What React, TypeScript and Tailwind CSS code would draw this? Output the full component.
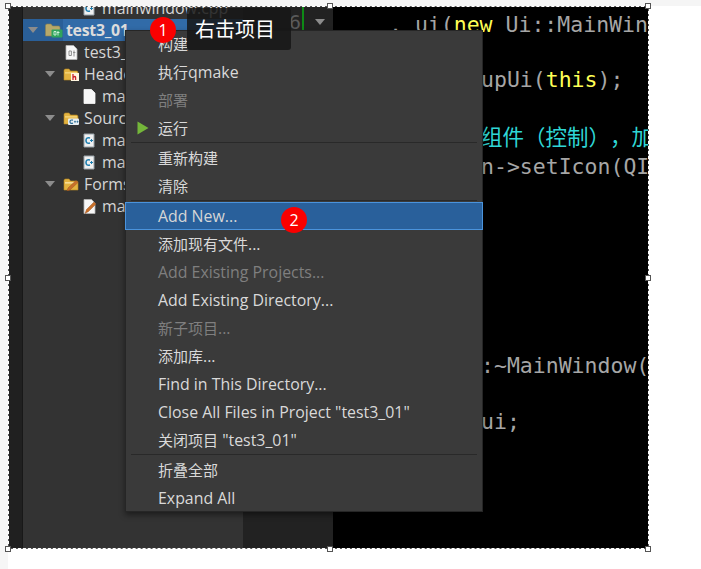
import React from "react";

const UI_FONT = "font-['Open_Sans','Noto_Sans_CJK_SC',sans-serif]";

function Arrow() {
  return (
    <svg width="10" height="6" viewBox="0 0 10 6" className="shrink-0">
      <path d="M0 0H10L5 6Z" fill="#8c8c8c" />
    </svg>
  );
}

function FolderBase({ open }: { open?: boolean }) {
  return (
    <>
      <path d="M1 3.5 Q1 2 2.5 2 H6 L7.5 4 H13.5 Q15 4 15 5.5 V13 H1 Z" fill="#e3b341" stroke="#b98a22" strokeWidth="0.6" />
      <path d="M2 5.2 H14 V6.5 H2 Z" fill={open ? "#fbe7a8" : "#f6d77e"} />
    </>
  );
}

function QtFolder() {
  return (
    <svg width="18" height="15" viewBox="0 0 18 15" className="shrink-0">
      <path d="M0.5 2.5 Q0.5 1 2 1 H6 L7.5 3 H13.5 Q15 3 15 4.5 V13 H0.5 Z" fill="#b7a86a" stroke="#8b8050" strokeWidth="0.6" />
      <rect x="6.5" y="6.5" width="11" height="8" rx="1" fill="#2fa45c" />
      <path d="M9 8.5h2v3.5H9zM13 8v4.5M12 9.5h2.5" stroke="#d6f5e0" strokeWidth="0.9" fill="none" />
    </svg>
  );
}

function TagFolder({ kind }: { kind: "h" | "c" | "f" }) {
  return (
    <svg width="16" height="14" viewBox="0 0 16 14" className="shrink-0">
      <FolderBase open={kind === "f"} />
      {kind === "h" && (
        <>
          <rect x="8" y="6" width="8" height="8" fill="#fff6e0" />
          <path d="M10 7v6M10 10.5q2.6-2 2.6 0V13" stroke="#c9242b" strokeWidth="1.3" fill="none" />
        </>
      )}
      {kind === "c" && (
        <>
          <rect x="5" y="7.5" width="11" height="6.5" rx="1" fill="#e8eef2" />
          <path d="M10 9.2 Q7 8.4 7 10.7 Q7 13 10 12.2" stroke="#2b6d96" strokeWidth="1.2" fill="none" />
          <path d="M11 10.7h2M12 9.7v2M13.5 10.7h2M14.5 9.7v2" stroke="#2b6d96" strokeWidth="0.8" />
        </>
      )}
      {kind === "f" && <path d="M4 14 L5 11 L13 3.5 L15 5.5 L7 13 Z" fill="#c8702a" stroke="#8d4a18" strokeWidth="0.4" />}
    </svg>
  );
}

function FileIcon({ kind }: { kind: "qt" | "blank" | "cpp" | "form" }) {
  const square = kind === "cpp";
  return (
    <svg width="13" height="15" viewBox="0 0 13 15" className="shrink-0">
      {square ? (
        <path d="M1 1H11V14H1Z" fill="#f0f0f0" stroke="#9aa4aa" strokeWidth="1" />
      ) : (
        <path d="M1 0.5H8.5L12 4V14.5H1Z" fill="#f7f7f7" stroke={kind === "blank" ? "#f7f7f7" : "#b5b5b5"} strokeWidth="0.8" />
      )}
      {kind === "qt" && <path d="M4 6h2.4v4.5H4zM9 5.5v6M8 7.5h2.4" stroke="#8d8d8d" strokeWidth="1" fill="none" />}
      {kind === "cpp" && (
        <>
          <path d="M7 5 Q3 4 3 7.5 Q3 11 7 10" stroke="#1f7fb0" strokeWidth="1.6" fill="none" />
          <path d="M7 7.5h3M8.5 6v3" stroke="#1f7fb0" strokeWidth="1" />
        </>
      )}
      {kind === "form" && <path d="M2 14.5 L3.5 10.5 L11 3 L13 5 L5.5 12.5 Z" fill="#c8702a" stroke="#8d4a18" strokeWidth="0.4" />}
    </svg>
  );
}

function Mixed({ text }: { text: string }) {
  const parts = text.split(/([\u4e00-\u9fff]+)/).filter(Boolean);
  return (
    <>
      {parts.map((p, i) =>
        /[\u4e00-\u9fff]/.test(p) ? (
          <span key={i} className="text-[15px]">
            {p}
          </span>
        ) : (
          <span key={i}>{p}</span>
        )
      )}
    </>
  );
}

function TreeRow({ indent, icon, label, arrow }: { indent: string; icon: React.ReactNode; label: string; arrow?: boolean }) {
  return (
    <div className={`flex h-[22px] shrink-0 items-center whitespace-nowrap text-[15.9px] text-[#d6d6d6] ${indent}`}>
      {arrow && <span className="mr-[8px] flex"><Arrow /></span>}
      {icon}
      <span className={arrow ? "ml-[5px] pt-[2px]" : "ml-[6px] pt-[2px]"}>{label}</span>
    </div>
  );
}

type MenuEntry = { label?: string; disabled?: boolean; run?: boolean; active?: boolean; sep?: boolean };

const MENU: MenuEntry[] = [
  { label: "构建" },
  { label: "执行qmake" },
  { label: "部署", disabled: true },
  { label: "运行", run: true },
  { sep: true },
  { label: "重新构建" },
  { label: "清除" },
  { sep: true },
  { label: "Add New...", active: true },
  { label: "添加现有文件..." },
  { label: "Add Existing Projects...", disabled: true },
  { label: "Add Existing Directory..." },
  { label: "新子项目...", disabled: true },
  { label: "添加库..." },
  { label: "Find in This Directory..." },
  { label: 'Close All Files in Project "test3_01"' },
  { label: '关闭项目 "test3_01"' },
  { sep: true },
  { label: "折叠全部" },
  { label: "Expand All" },
];

function Menu() {
  return (
    <div className={`absolute left-[117px] top-[24px] w-[358px] border border-[#262626] bg-[#3a3a3a] text-[15.9px] shadow-[0_3px_6px_rgba(0,0,0,0.45)] ${UI_FONT}`}>
      {MENU.map((m, i) =>
        m.sep ? (
          <div key={i} className="flex h-[2px] items-start pl-[5px] pr-[5px]">
            <div className="h-px w-full bg-[#292929]" />
          </div>
        ) : (
          <div
            key={i}
            className={`relative flex h-[28px] items-center whitespace-nowrap pl-[32px] pt-[2px] first:h-[27px] first:pt-0 last:h-[27px] ${
              m.active ? "-mx-px border border-[#4a93dc] bg-[#29609b] text-[#d6d6d6]" : m.disabled ? "text-[#7f7f7f]" : "text-[#d9d9d9]"
            }`}
          >
            {m.run && (
              <svg width="12" height="14" viewBox="0 0 12 14" className="absolute left-[11px] top-[7px]">
                <path d="M0.5 0.5L11.5 7L0.5 13.5Z" fill="#74b63a" />
              </svg>
            )}
            <span><Mixed text={m.label ?? ""} /></span>
          </div>
        )
      )}
    </div>
  );
}

function CodeLine({ top, pad, children }: { top: string; pad: string; children: React.ReactNode }) {
  return <div className={`h-[28px] whitespace-pre leading-[28px] ${top} ${pad}`}>{children}</div>;
}

function Badge({ n, pos }: { n: string; pos: string }) {
  return (
    <div className={`absolute flex h-[26px] w-[26px] items-center justify-center rounded-full bg-[#fa0000] text-[16px] text-white ${pos} ${UI_FONT}`}>
      {n}
    </div>
  );
}

const HANDLES = [
  "-left-[3px] -top-[3px]",
  "left-[319px] -top-[3px]",
  "left-[637px] -top-[3px]",
  "-left-[3px] top-[269px]",
  "left-[637px] top-[269px]",
  "-left-[3px] top-[540px]",
  "left-[319px] top-[540px]",
  "left-[637px] top-[540px]",
];

export default function App() {
  return (
    <div className="flex h-[569px] w-[701px] flex-col overflow-hidden bg-white">
      <div className="h-[6px] shrink-0 bg-[#f5f5f5]" />
      <div className="flex flex-1">
        <div className="w-[8px] shrink-0 bg-[#f6f6f6]" />
        <div className="relative h-[543px] w-[641px] shrink-0">
          <div className="flex h-full w-full overflow-hidden">
            <div className="w-[15px] shrink-0 border-r border-[#181818] bg-[#202020]" />
            <div className={`flex w-[220px] shrink-0 flex-col overflow-hidden bg-[#333333] pt-px ${UI_FONT}`}>
              <div className="-mt-[10px] flex flex-col">
                <TreeRow indent="pl-[60px]" icon={<FileIcon kind="cpp" />} label="mainwindow.cpp" />
                <div className="flex h-[22px] shrink-0 items-center bg-[#2a5f98] pl-[5px] text-[15.9px] font-bold tracking-[-0.3px] text-[#dcdcdc]">
                  <span className="mr-[7px] flex"><Arrow /></span>
                  <QtFolder />
                  <span className="flex h-full flex-1 items-center bg-[#316ba8] pl-[3px] pt-[2px]">test3_01</span>
                </div>
                <TreeRow indent="pl-[42px]" icon={<FileIcon kind="qt" />} label="test3_01.pro" />
                <TreeRow indent="pl-[22px]" arrow icon={<TagFolder kind="h" />} label="Headers" />
                <TreeRow indent="pl-[60px]" icon={<FileIcon kind="blank" />} label="mainwindow.h" />
                <TreeRow indent="pl-[22px]" arrow icon={<TagFolder kind="c" />} label="Sources" />
                <TreeRow indent="pl-[60px]" icon={<FileIcon kind="cpp" />} label="main.cpp" />
                <TreeRow indent="pl-[60px]" icon={<FileIcon kind="cpp" />} label="mainwindow.cpp" />
                <TreeRow indent="pl-[22px]" arrow icon={<TagFolder kind="f" />} label="Forms" />
                <TreeRow indent="pl-[60px]" icon={<FileIcon kind="form" />} label="mainwindow.ui" />
              </div>
            </div>
            <div className="flex w-[90px] shrink-0 flex-col bg-[#222222] font-['DejaVu_Sans_Mono',monospace] text-[#5a5a5a]">
              <div className="flex h-[24px] items-start">
                <span className="ml-[46px] mt-[4px] w-[13px] text-[20px] leading-[24px]">6</span>
                <span className="h-[24px] w-[2px] bg-[#0e8a16]" />
                <span className="ml-[11px] mt-[13px] flex"><Arrow /></span>
              </div>
              <div className="ml-[30px] mt-[461px] text-[20px] leading-[24px]">25</div>
            </div>
            <div className="flex-1 overflow-hidden bg-black font-['DejaVu_Sans_Mono',monospace] text-[21.5px] text-[#a6a6a6]">
              <CodeLine top="mt-[5px]" pad="pl-[56px]">
                , ui(<span className="text-[#ffff55]">new</span> Ui::MainWindow
              </CodeLine>
              <CodeLine top="mt-[27px]" pad="pl-[148px]">
                upUi(<span className="text-[#ffff55]">this</span>);
              </CodeLine>
              <CodeLine top="mt-[28px]" pad="pl-[148px]">
                <span className="font-['Noto_Sans_CJK_SC',monospace] text-[#2fd6d6] [text-spacing-trim:space-all]">组件（控制），加</span>
              </CodeLine>
              <CodeLine top="mt-[3px]" pad="pl-[148px]">n-&gt;setIcon(QIcon</CodeLine>
              <CodeLine top="mt-[171px]" pad="pl-[148px]">:~MainWindow(</CodeLine>
              <CodeLine top="mt-[28px]" pad="pl-[148px]">ui;</CodeLine>
            </div>
          </div>

          <Menu />

          <div className="absolute left-[179px] top-[2px] flex h-[42px] w-[104px] items-center rounded-[3px] bg-[#161616]/85 pl-[8px] font-['Noto_Sans_CJK_SC',sans-serif] text-[20px] text-white">
            右击项目
          </div>

          <Badge n="1" pos="left-[142px] top-[11px]" />
          <Badge n="2" pos="left-[273px] top-[201px]" />

          <div className="pointer-events-none absolute inset-0 border border-[#555555]" />
          <div className="pointer-events-none absolute inset-0 border border-dashed border-white" />
          {HANDLES.map((h) => (
            <div key={h} className={`absolute h-[6px] w-[6px] border border-[#555555] bg-white ${h}`} />
          ))}
        </div>
      </div>
    </div>
  );
}
